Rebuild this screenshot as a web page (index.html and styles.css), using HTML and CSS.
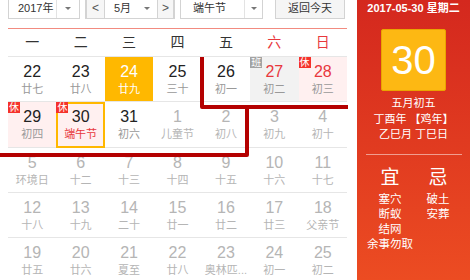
FILE: index.html
```html
<!DOCTYPE html>
<html>
  <head>
    <meta charset="utf-8" />
    <title>万年历</title>
    <link rel="stylesheet" href="styles.css">
  </head>
  <body>
    <div class="page">
      <div class="cal">
        <div class="toolbar">
          <div class="select year">
            <span class="val">2017年</span>
            <span class="arrow"></span>
          </div>
          <div class="month-group">
            <span class="nav">&lt;</span>
            <div class="select month">
              <span class="val">5月</span>
              <span class="arrow plain"></span>
            </div>
            <span class="nav next">&gt;</span>
          </div>
          <div class="select festival">
            <span class="val">端午节</span>
            <span class="arrow"></span>
          </div>
          <button class="today-btn">返回今天</button>
        </div>

        <div class="week">
          <span>一</span><span>二</span><span>三</span><span>四</span><span>五</span>
          <span class="red">六</span><span class="red">日</span>
        </div>

        <div class="days">
          <div class="day"><div class="num">22</div><div class="lunar">廿七</div></div>
          <div class="day"><div class="num">23</div><div class="lunar">廿八</div></div>
          <div class="day today"><div class="num">24</div><div class="lunar">廿九</div></div>
          <div class="day"><div class="num">25</div><div class="lunar">三十</div></div>
          <div class="day"><div class="num">26</div><div class="lunar">初一</div></div>
          <div class="day work"><span class="tag work-tag">班</span><div class="num red">27</div><div class="lunar">初二</div></div>
          <div class="day rest"><span class="tag">休</span><div class="num red">28</div><div class="lunar">初三</div></div>

          <div class="day rest"><span class="tag">休</span><div class="num">29</div><div class="lunar">初四</div></div>
          <div class="day rest selected"><span class="tag">休</span><div class="num">30</div><div class="lunar red">端午节</div></div>
          <div class="day"><div class="num">31</div><div class="lunar">初六</div></div>
          <div class="day other"><div class="num">1</div><div class="lunar">儿童节</div></div>
          <div class="day other"><div class="num">2</div><div class="lunar">初八</div></div>
          <div class="day other"><div class="num">3</div><div class="lunar">初九</div></div>
          <div class="day other"><div class="num">4</div><div class="lunar">初十</div></div>

          <div class="day other"><div class="num">5</div><div class="lunar">环境日</div></div>
          <div class="day other"><div class="num">6</div><div class="lunar">十二</div></div>
          <div class="day other"><div class="num">7</div><div class="lunar">十三</div></div>
          <div class="day other"><div class="num">8</div><div class="lunar">十四</div></div>
          <div class="day other"><div class="num">9</div><div class="lunar">十五</div></div>
          <div class="day other"><div class="num">10</div><div class="lunar">十六</div></div>
          <div class="day other"><div class="num">11</div><div class="lunar">十七</div></div>

          <div class="day other"><div class="num">12</div><div class="lunar">十八</div></div>
          <div class="day other"><div class="num">13</div><div class="lunar">十九</div></div>
          <div class="day other"><div class="num">14</div><div class="lunar">二十</div></div>
          <div class="day other"><div class="num">15</div><div class="lunar">廿一</div></div>
          <div class="day other"><div class="num">16</div><div class="lunar">廿二</div></div>
          <div class="day other"><div class="num">17</div><div class="lunar">廿三</div></div>
          <div class="day other"><div class="num">18</div><div class="lunar">父亲节</div></div>

          <div class="day other"><div class="num">19</div><div class="lunar">廿五</div></div>
          <div class="day other"><div class="num">20</div><div class="lunar">廿六</div></div>
          <div class="day other"><div class="num">21</div><div class="lunar">夏至</div></div>
          <div class="day other"><div class="num">22</div><div class="lunar">廿八</div></div>
          <div class="day other"><div class="num">23</div><div class="lunar">奥林匹...</div></div>
          <div class="day other"><div class="num">24</div><div class="lunar">初一</div></div>
          <div class="day other"><div class="num">25</div><div class="lunar">初二</div></div>
        </div>
      </div>

      <div class="panel">
        <div class="date">2017-05-30 星期二</div>
        <div class="big-day">30</div>
        <div class="lunar-info">
          <div>五月初五</div>
          <div>丁酉年 【鸡年】</div>
          <div>乙巳月 丁巳日</div>
        </div>
        <div class="sep"></div>
        <div class="yiji">
          <div class="col">
            <h3>宜</h3>
            <p>塞穴</p>
            <p>断蚁</p>
            <p>结网</p>
            <p>余事勿取</p>
          </div>
          <div class="col">
            <h3>忌</h3>
            <p>破土</p>
            <p>安葬</p>
          </div>
        </div>
      </div>

      <!-- holiday week outline -->
      <svg class="outline" width="470" height="280" viewBox="0 0 470 280">
        <path d="M202 57 V107 H348 M0 155 H247 V107" fill="none" stroke="#b40000" stroke-width="4" stroke-linejoin="round" />
      </svg>
    </div>
  </body>
</html>
```

FILE: styles.css
```css
body {
  margin: 0;
  width: 470px;
  height: 280px;
  overflow: hidden;
  background: #FFFFFF;
  color: #222;
  font-family: "Liberation Sans", "Noto Sans CJK SC", sans-serif;
}
.page {
  position: relative;
  display: flex;
  height: 280px;
}
.cal {
  width: 339px;
  margin-left: 8px;
}
/* Toolbar */
.toolbar {
  display: flex;
  height: 21px;
  margin-top: -2px;
  padding-bottom: 9px;
  border-bottom: 1px solid #f28b80;
  font-size: 11px;
}
.select {
  display: flex;
  box-sizing: border-box;
  border: 1px solid #d3d3d3;
  background: #FFFFFF;
  color: #333;
}
.select .val {
  flex: 1;
  padding-left: 9px;
  line-height: 19px;
}
.arrow {
  width: 22px;
  border-left: 1px solid #e3e3e3;
  display: flex;
  align-items: center;
  justify-content: center;
}
.arrow:after {
  content: "";
  border-left: 3px solid transparent;
  border-right: 3px solid transparent;
  border-top: 3px solid #777;
}
.arrow.plain {
  border-left: none;
  width: 20px;
}
.year {
  width: 72px;
}
.month-group {
  display: flex;
  margin-left: 5px;
}
.nav {
  box-sizing: border-box;
  width: 20px;
  border: 1px solid #d3d3d3;
  border-left-width: 2px;
  background: #f6f6f6;
  text-align: center;
  line-height: 19px;
  color: #555;
  font-size: 12px;
}
.nav.next {
  width: 17px;
  border-left-width: 0;
  border-right-width: 2px;
}
.month {
  width: 53px;
  border-left: none;
}
.month .val {
  padding-left: 9px;
}
.festival {
  width: 83px;
  margin-left: 5px;
}
.festival .val {
  padding-left: 12px;
}
.festival .arrow {
  width: 17px;
}
.today-btn {
  width: 70px;
  margin-left: 12px;
  padding: 0;
  border: 1px solid #d3d3d3;
  background: #f5f5f5;
  color: #333;
  font-family: inherit;
  font-size: 11px;
  line-height: 19px;
}
/* Week header */
.week {
  display: grid;
  grid-template-columns: repeat(7, 1fr);
  height: 27px;
  line-height: 27px;
  border-bottom: 1px solid #e6e6e6;
  text-align: center;
  font-size: 14px;
  color: #333;
}
.red {
  color: #e8383d;
}
/* Day grid */
.days {
  display: grid;
  grid-template-columns: repeat(7, 1fr);
  grid-auto-rows: 45.33px;
}
.day {
  position: relative;
  box-sizing: border-box;
  padding-top: 6px;
  border-bottom: 1px solid #e6e6e6;
  text-align: center;
}
.num {
  font-size: 16px;
  line-height: 18px;
}
.lunar {
  font-size: 11px;
  line-height: 16px;
  color: #999;
}
.lunar.red {
  color: #e8383d;
}
.num.red {
  color: #e8383d;
}
.day.today {
  background: #ffb800;
  color: #FFFFFF;
}
.day.today .lunar {
  color: #FFFFFF;
}
.day.rest {
  background: #fff0f0;
}
.day.work {
  background: #f2f2f2;
}
.day.selected {
  border: 2px solid #ffb800;
  padding-top: 4px;
}
.day.other .num,
.day.other .lunar {
  color: #b5b5b5;
}
.tag {
  position: absolute;
  top: 0;
  left: 0;
  width: 12px;
  height: 11px;
  background: #f5312b;
  color: #FFFFFF;
  font-size: 10px;
  line-height: 11px;
  text-align: center;
}
.selected .tag {
  top: -2px;
  left: -2px;
}
.work-tag {
  background: #a3a3a3;
}
/* Right panel */
.panel {
  width: 113px;
  margin-left: 10px;
  background: linear-gradient(#d4281e, #ec4c22);
  color: #FFFFFF;
  text-align: center;
}
.date {
  font-size: 11px;
  font-weight: bold;
  line-height: 16px;
}
.big-day {
  box-sizing: border-box;
  width: 65px;
  height: 62px;
  margin: 13px auto 0;
  background: #fdb813;
  border: 1px solid #eaa400;
  border-radius: 2px;
  font-size: 40px;
  line-height: 60px;
}
.lunar-info {
  margin-top: 5px;
  font-size: 11px;
  line-height: 15.5px;
}
.sep {
  margin: 11px 8px 0 9px;
  border-top: 1px solid rgba(255,255,255,0.5);
}
.yiji {
  display: flex;
  margin: 0 8px 0 9px;
}
.yiji .col {
  flex: 1;
}
.yiji h3 {
  margin: 11px 0 0;
  font-size: 19px;
  font-weight: normal;
  line-height: 24px;
}
.yiji p {
  margin: 0;
  font-size: 11.5px;
  line-height: 15px;
}
.yiji h3 + p {
  margin-top: 2px;
}
.outline {
  position: absolute;
  top: 0;
  left: 0;
  pointer-events: none;
}
```
